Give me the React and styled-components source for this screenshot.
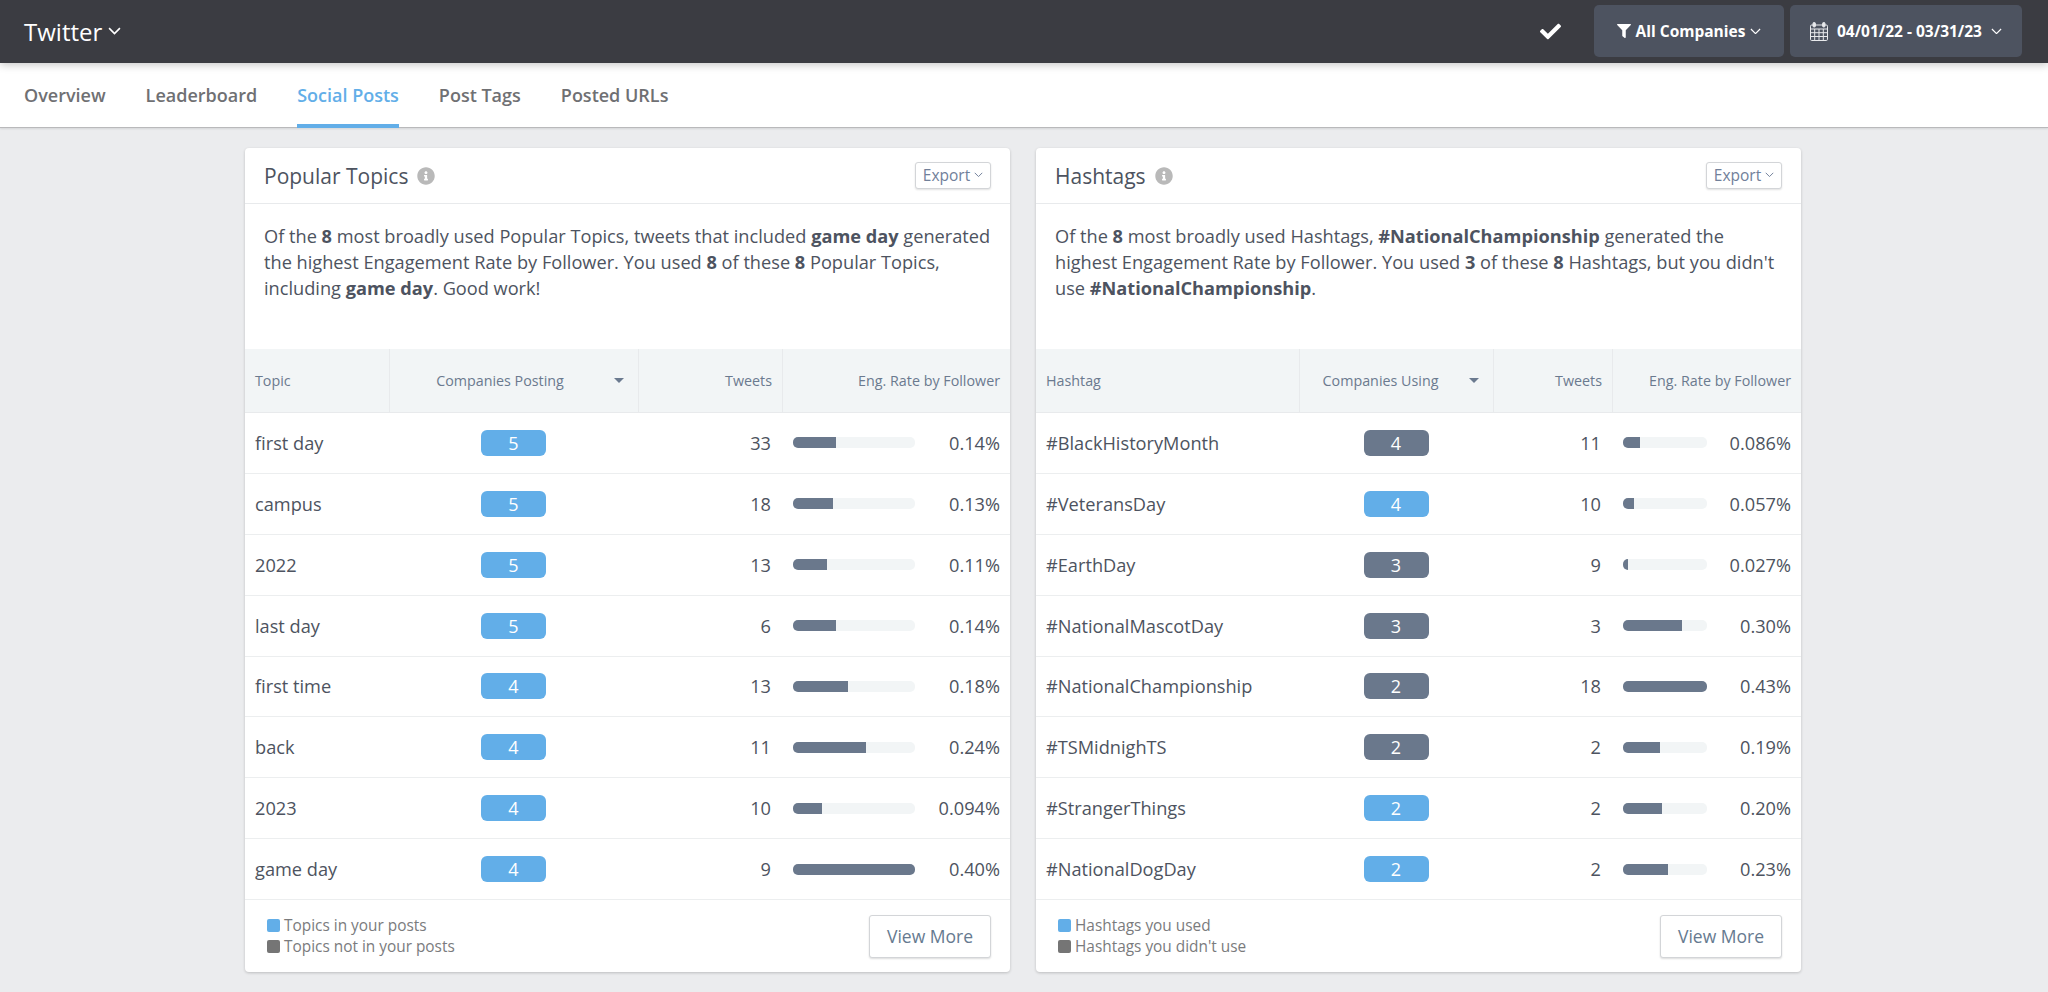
import React from 'react';
import styled, { createGlobalStyle } from 'styled-components';
import { FaCheck, FaFilter, FaInfoCircle } from 'react-icons/fa';

const GlobalStyle = createGlobalStyle`
  html, body {
    margin: 0;
    padding: 0;
    background: #ebecee;
    font-family: "Open Sans", "Liberation Sans", sans-serif;
  }
  * { box-sizing: border-box; }
`;

const Page = styled.div`
  min-height: 992px;
  display: flex;
  flex-direction: column;
`;

const TopBar = styled.header`
  height: 63px;
  padding: 5px 26px 6px 24px;
  background: #3b3c42;
  display: flex;
  align-items: center;
  position: relative;
  z-index: 2;
  box-shadow: 0 2px 8px rgba(0, 0, 0, 0.22);
`;

const Brand = styled.div`
  display: flex;
  align-items: center;
  gap: 6px;
  margin-right: auto;
  color: #fff;
  font-size: 24px;
`;

const CheckMark = styled.span`
  display: flex;
  color: #fff;
  font-size: 21px;
  margin-right: 33px;
`;

const BarButton = styled.div`
  height: 52px;
  width: ${(p) => p.$width}px;
  margin-left: ${(p) => p.$gap || 0}px;
  background: #4d5360;
  border-radius: 5px;
  color: #fff;
  font-size: 15.5px;
  font-weight: 700;
  display: flex;
  align-items: center;
  justify-content: center;
  gap: ${(p) => p.$inner}px;
`;

const TabBar = styled.nav`
  height: 65px;
  padding-left: 24px;
  background: #fff;
  border-bottom: 1px solid #b9b9bb;
  display: flex;
  gap: 40px;
  box-shadow: 0 1px 2px rgba(0, 0, 0, 0.1);
`;

const Tab = styled.a`
  height: 65px;
  padding-top: 19px;
  font-size: 18px;
  line-height: 26px;
  font-weight: 600;
  color: ${(p) => (p.$active ? '#62aee8' : '#6f7073')};
  border-bottom: ${(p) => (p.$active ? '4px solid #62aee8' : 'none')};
`;

const Content = styled.main`
  padding: 20px 0 20px 245px;
  display: flex;
  gap: 26px;
`;

const Card = styled.section`
  width: 765px;
  height: 824px;
  background: #fff;
  border-radius: 4px;
  box-shadow: 0 1px 3px rgba(0, 0, 0, 0.2);
  display: flex;
  flex-direction: column;
`;

const CardHead = styled.div`
  height: 56px;
  flex: none;
  padding: 0 19px 0 19px;
  border-bottom: 1px solid #e8eaec;
  display: flex;
  align-items: center;
`;

const CardTitle = styled.h2`
  margin: 0;
  font-size: 21px;
  font-weight: 400;
  color: #4d5360;
`;

const InfoIcon = styled.span`
  display: flex;
  margin-left: 9px;
  margin-right: auto;
  font-size: 18px;
  color: #b9b9b9;
`;

const ExportButton = styled.button`
  width: 76px;
  height: 27px;
  padding: 0 0 1px;
  background: #fff;
  border: 1px solid #d3d5d8;
  border-radius: 3px;
  box-shadow: 0 1px 2px rgba(0, 0, 0, 0.12);
  color: #71809a;
  font-family: inherit;
  font-size: 15.5px;
  display: flex;
  align-items: center;
  justify-content: center;
  gap: 4px;
`;

const Summary = styled.p`
  height: 145px;
  flex: none;
  margin: 0;
  padding: 19px 19px 0;
  font-size: 18.2px;
  line-height: 26px;
  color: #4d5360;
  b { font-weight: 700; }
`;

const HeadRow = styled.div`
  height: 64px;
  flex: none;
  display: grid;
  grid-template-columns: ${(p) => p.$cols};
  background: #f2f5f6;
  border-bottom: 1px solid #e8eaec;
`;

const HeadCell = styled.div`
  padding: 0 10px;
  display: flex;
  align-items: center;
  justify-content: ${(p) => p.$align || 'flex-start'};
  font-size: 14.3px;
  color: #6b7a8f;
  & + & { border-left: 1px solid #e8eaec; }
`;

const SortCell = styled(HeadCell)`
  position: relative;
  justify-content: center;
  padding-right: ${(p) => p.$shift}px;
`;

const SortCaret = styled.span`
  position: absolute;
  right: 14px;
  top: 29px;
  border-style: solid;
  border-width: 5px 5px 0;
  border-color: #6b7a8f transparent transparent;
`;

const Row = styled.div`
  height: 60.875px;
  flex: none;
  display: grid;
  grid-template-columns: ${(p) => p.$cols};
  align-items: center;
  border-bottom: 1px solid #eceeef;
  font-size: 18.2px;
  color: #4d5360;
`;

const NameCell = styled.div`
  padding-left: 10px;
`;

const BadgeCell = styled.div`
  display: flex;
  justify-content: center;
`;

const Badge = styled.span`
  width: 65px;
  height: 26px;
  border-radius: 6px;
  background: ${(p) => (p.$used ? '#62aee8' : '#6a788c')};
  color: #fff;
  font-size: 18px;
  line-height: 26px;
  text-align: center;
`;

const TweetsCell = styled.div`
  padding-right: 11px;
  text-align: right;
`;

const RateCell = styled.div`
  padding: 0 10px 0 11px;
  display: flex;
  align-items: center;
  justify-content: space-between;
`;

const BarTrack = styled.div`
  width: ${(p) => p.$width}px;
  height: 11px;
  background: #f2f5f6;
  border-radius: 5px;
  overflow: hidden;
`;

const BarFill = styled.div`
  height: 100%;
  background: #6a788c;
`;

const CardFoot = styled.div`
  flex: 1;
  padding: 0 19px 0 22px;
  display: flex;
  align-items: center;
  justify-content: space-between;
`;

const LegendList = styled.div`
  display: flex;
  flex-direction: column;
`;

const LegendItem = styled.div`
  display: flex;
  align-items: center;
  gap: 4px;
  font-size: 15.4px;
  line-height: 21.5px;
  color: #7a7b7d;
`;

const Swatch = styled.i`
  width: 13px;
  height: 13px;
  border-radius: 2px;
  background: ${(p) => (p.$used ? '#62aee8' : '#757575')};
`;

const ViewMore = styled.button`
  width: 122px;
  height: 43px;
  padding: 0;
  background: #fff;
  border: 1px solid #d3d5d8;
  border-radius: 3px;
  box-shadow: 0 1px 2px rgba(0, 0, 0, 0.14);
  color: #667a90;
  font-family: inherit;
  font-size: 17.5px;
`;

const Chevron = ({ size = 12, width = 1.4 }) => (
  <svg width={size} height={size * 0.6} viewBox="0 0 12 7" fill="none" stroke="currentColor" strokeWidth={width}>
    <path d="M1 1l5 5 5-5" />
  </svg>
);

const CalendarIcon = () => (
  <svg width="18" height="19" viewBox="0 0 18 19" fill="none" stroke="#e8e9ec" strokeWidth="1">
    <rect x="0.5" y="3" width="17" height="15.5" rx="1.2" />
    <path d="M0.5 7h17M0.5 10.7h17M0.5 14.5h17M4.7 7v11.5M9 7v11.5M13.3 7v11.5" />
    <rect x="3" y="0.5" width="2.4" height="4.5" rx="1" fill="#e8e9ec" />
    <rect x="12.6" y="0.5" width="2.4" height="4.5" rx="1" fill="#e8e9ec" />
  </svg>
);

const topicRows = [
  ['first day', 5, true, 33, 0.14, '0.14%'],
  ['campus', 5, true, 18, 0.13, '0.13%'],
  ['2022', 5, true, 13, 0.11, '0.11%'],
  ['last day', 5, true, 6, 0.14, '0.14%'],
  ['first time', 4, true, 13, 0.18, '0.18%'],
  ['back', 4, true, 11, 0.24, '0.24%'],
  ['2023', 4, true, 10, 0.094, '0.094%'],
  ['game day', 4, true, 9, 0.4, '0.40%']
];

const hashtagRows = [
  ['#BlackHistoryMonth', 4, false, 11, 0.086, '0.086%'],
  ['#VeteransDay', 4, true, 10, 0.057, '0.057%'],
  ['#EarthDay', 3, false, 9, 0.027, '0.027%'],
  ['#NationalMascotDay', 3, false, 3, 0.3, '0.30%'],
  ['#NationalChampionship', 2, false, 18, 0.43, '0.43%'],
  ['#TSMidnighTS', 2, false, 2, 0.19, '0.19%'],
  ['#StrangerThings', 2, true, 2, 0.2, '0.20%'],
  ['#NationalDogDay', 2, true, 2, 0.23, '0.23%']
];

const Panel = ({ title, summary, cols, labels, shift, rows, max, barWidth, legend }) => (
  <Card>
    <CardHead>
      <CardTitle>{title}</CardTitle>
      <InfoIcon><FaInfoCircle /></InfoIcon>
      <ExportButton>Export <Chevron size={9} width={1.3} /></ExportButton>
    </CardHead>
    <Summary>{summary}</Summary>
    <HeadRow $cols={cols}>
      <HeadCell>{labels[0]}</HeadCell>
      <SortCell $shift={shift}>
        {labels[1]}
        <SortCaret />
      </SortCell>
      <HeadCell $align="flex-end">Tweets</HeadCell>
      <HeadCell $align="flex-end">Eng. Rate by Follower</HeadCell>
    </HeadRow>
    {rows.map(([name, count, used, tweets, rate, label]) => (
      <Row key={name} $cols={cols}>
        <NameCell>{name}</NameCell>
        <BadgeCell><Badge $used={used}>{count}</Badge></BadgeCell>
        <TweetsCell>{tweets}</TweetsCell>
        <RateCell>
          <BarTrack $width={barWidth}>
            <BarFill style={{ width: `${(rate / max) * 100}%` }} />
          </BarTrack>
          {label}
        </RateCell>
      </Row>
    ))}
    <CardFoot>
      <LegendList>
        <LegendItem><Swatch $used />{legend[0]}</LegendItem>
        <LegendItem><Swatch />{legend[1]}</LegendItem>
      </LegendList>
      <ViewMore>View More</ViewMore>
    </CardFoot>
  </Card>
);

export default function App() {
  return (
    <Page>
      <GlobalStyle />
      <TopBar>
        <Brand>Twitter <Chevron size={13} width={1.5} /></Brand>
        <CheckMark><FaCheck /></CheckMark>
        <BarButton $width={190} $inner={5}>
          <FaFilter size={14} /> All Companies <Chevron size={11} width={1.3} />
        </BarButton>
        <BarButton $width={232} $gap={6} $inner={9}>
          <CalendarIcon /> 04/01/22 - 03/31/23 <Chevron size={11} width={1.3} />
        </BarButton>
      </TopBar>
      <TabBar>
        <Tab>Overview</Tab>
        <Tab>Leaderboard</Tab>
        <Tab $active>Social Posts</Tab>
        <Tab>Post Tags</Tab>
        <Tab>Posted URLs</Tab>
      </TabBar>
      <Content>
        <Panel
          title="Popular Topics"
          summary={
            <>
              Of the <b>8</b> most broadly used Popular Topics, tweets that included <b>game day</b> generated
              the highest Engagement Rate by Follower. You used <b>8</b> of these <b>8</b> Popular Topics,
              including <b>game day</b>. Good work!
            </>
          }
          cols="144px 249px 144px 228px"
          labels={['Topic', 'Companies Posting']}
          shift={38}
          rows={topicRows}
          max={0.4}
          barWidth={122}
          legend={['Topics in your posts', 'Topics not in your posts']}
        />
        <Panel
          title="Hashtags"
          summary={
            <>
              Of the <b>8</b> most broadly used Hashtags, <b>#NationalChampionship</b> generated the
              highest Engagement Rate by Follower. You used <b>3</b> of these <b>8</b> Hashtags, but you didn't
              use <b>#NationalChampionship</b>.
            </>
          }
          cols="263px 194px 119px 189px"
          labels={['Hashtag', 'Companies Using']}
          shift={42}
          rows={hashtagRows}
          max={0.43}
          barWidth={84}
          legend={['Hashtags you used', "Hashtags you didn't use"]}
        />
      </Content>
    </Page>
  );
}
